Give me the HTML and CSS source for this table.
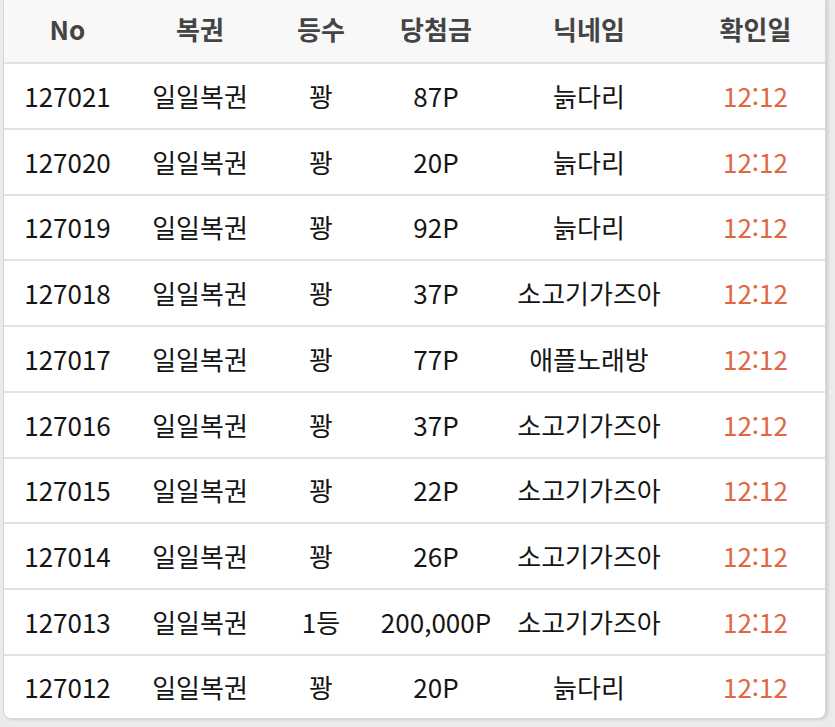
FILE: index.html
```html
<!DOCTYPE html>
<html lang="ko">
<head>
<meta charset="utf-8">
<link rel="stylesheet" href="styles.css">
</head>
<body>
<div class="card">
  <div class="row head">
    <div class="c c1">No</div><div class="c c2">복권</div><div class="c c3">등수</div><div class="c c4">당첨금</div><div class="c c5">닉네임</div><div class="c c6">확인일</div>
  </div>
  <div class="row"><div class="c c1">127021</div><div class="c c2">일일복권</div><div class="c c3">꽝</div><div class="c c4">87P</div><div class="c c5">늙다리</div><div class="c c6 time">12:12</div></div>
  <div class="row"><div class="c c1">127020</div><div class="c c2">일일복권</div><div class="c c3">꽝</div><div class="c c4">20P</div><div class="c c5">늙다리</div><div class="c c6 time">12:12</div></div>
  <div class="row"><div class="c c1">127019</div><div class="c c2">일일복권</div><div class="c c3">꽝</div><div class="c c4">92P</div><div class="c c5">늙다리</div><div class="c c6 time">12:12</div></div>
  <div class="row"><div class="c c1">127018</div><div class="c c2">일일복권</div><div class="c c3">꽝</div><div class="c c4">37P</div><div class="c c5">소고기가즈아</div><div class="c c6 time">12:12</div></div>
  <div class="row"><div class="c c1">127017</div><div class="c c2">일일복권</div><div class="c c3">꽝</div><div class="c c4">77P</div><div class="c c5">애플노래방</div><div class="c c6 time">12:12</div></div>
  <div class="row"><div class="c c1">127016</div><div class="c c2">일일복권</div><div class="c c3">꽝</div><div class="c c4">37P</div><div class="c c5">소고기가즈아</div><div class="c c6 time">12:12</div></div>
  <div class="row"><div class="c c1">127015</div><div class="c c2">일일복권</div><div class="c c3">꽝</div><div class="c c4">22P</div><div class="c c5">소고기가즈아</div><div class="c c6 time">12:12</div></div>
  <div class="row"><div class="c c1">127014</div><div class="c c2">일일복권</div><div class="c c3">꽝</div><div class="c c4">26P</div><div class="c c5">소고기가즈아</div><div class="c c6 time">12:12</div></div>
  <div class="row"><div class="c c1">127013</div><div class="c c2">일일복권</div><div class="c c3">1등</div><div class="c c4">200,000P</div><div class="c c5">소고기가즈아</div><div class="c c6 time">12:12</div></div>
  <div class="row last"><div class="c c1">127012</div><div class="c c2">일일복권</div><div class="c c3">꽝</div><div class="c c4">20P</div><div class="c c5">늙다리</div><div class="c c6 time">12:12</div></div>
</div>
</body>
</html>
```
FILE: styles.css
```css
html, body {
  margin: 0;
  padding: 0;
  background: #ebebeb;
  height: 100%;
  overflow: hidden;
}
body {
  font-family: "Noto Sans CJK KR", "Noto Sans", sans-serif;
  color: #151515;
}
.card {
  margin: -6px 0 0 3px;
  width: 823px;
  background: #fff;
  border: 1px solid #d8d8d8;
  border-radius: 8px;
  box-shadow: 2px 1px 3px rgba(0,0,0,0.12);
  overflow: hidden;
  box-sizing: border-box;
}
.row {
  display: grid;
  grid-template-columns: 127px 138px 104px 126px 180px 146px;
  height: 65.75px;
  border-top: 2px solid #e2e2e2;
  box-sizing: border-box;
  align-items: center;
  font-size: 26px;
}
.row.head {
  height: 67px;
  border-top: none;
  background: #f8f8f8;
  font-weight: 700;
  color: #444;
}
.row.last {
  height: 64px;
}
.c {
  text-align: center;
  white-space: nowrap;
  line-height: 1;
}
.c6 {
  padding-left: 7px;
}
.time {
  color: #e0673f;
}
```
